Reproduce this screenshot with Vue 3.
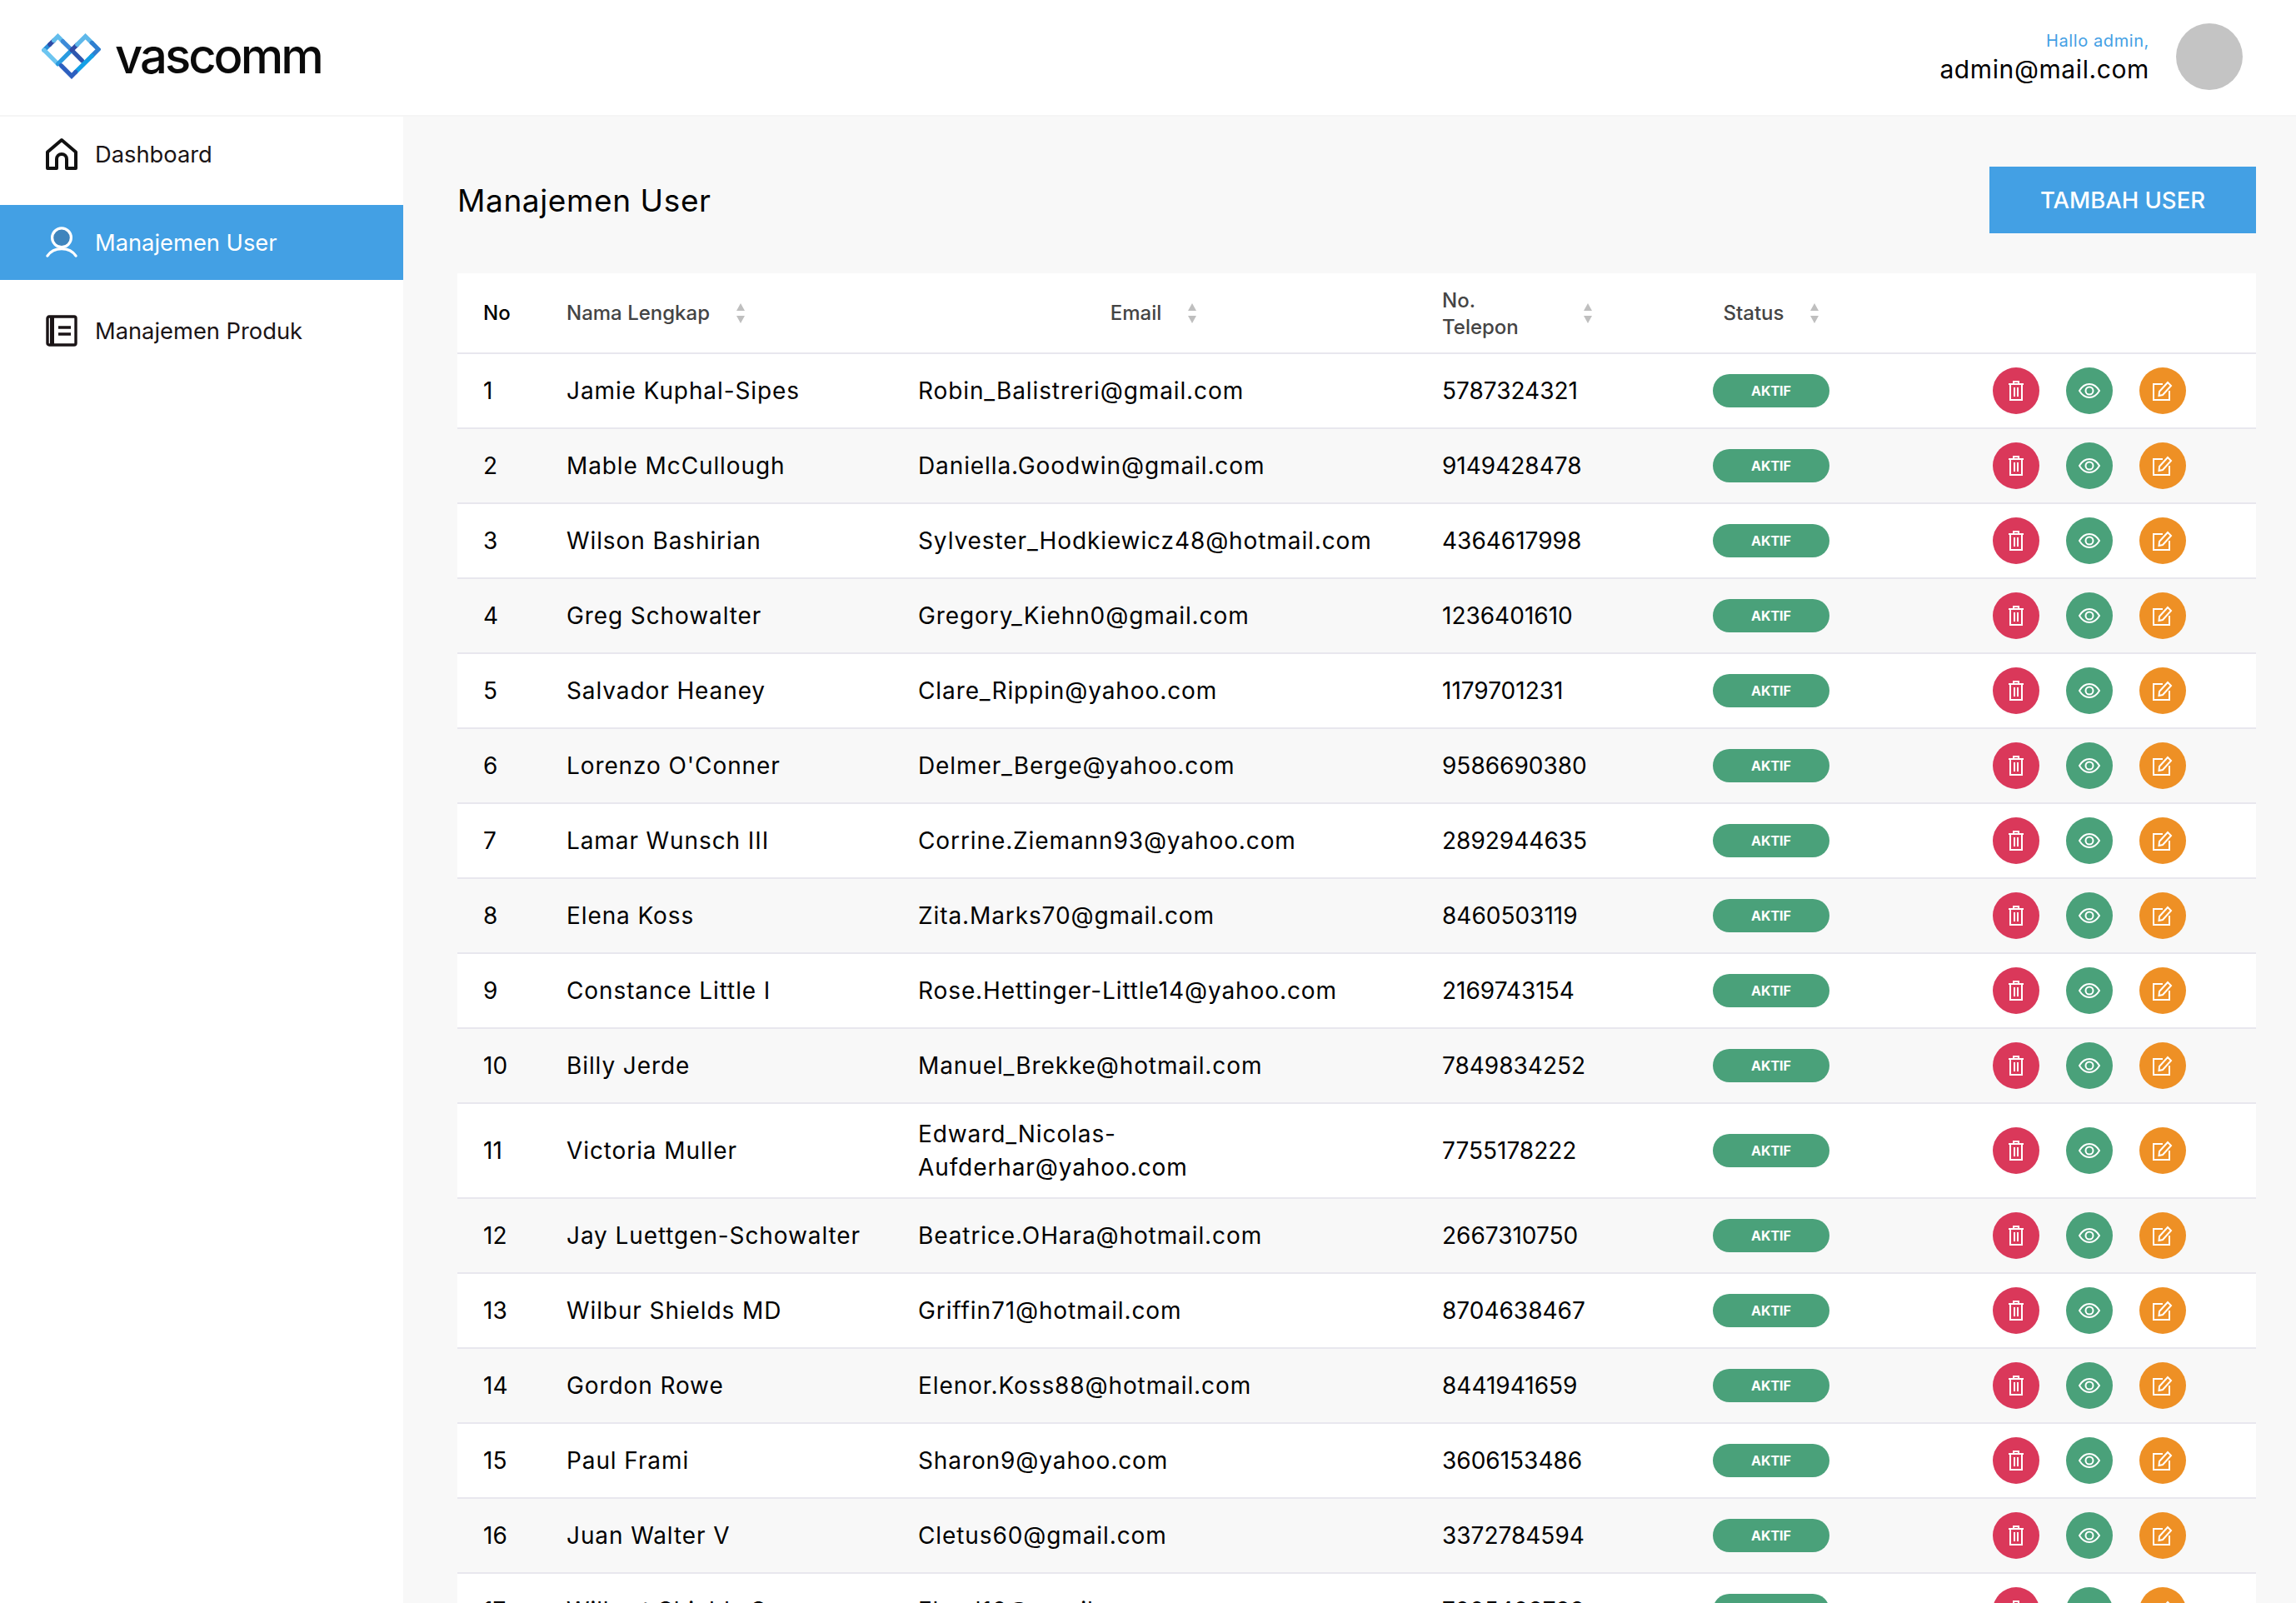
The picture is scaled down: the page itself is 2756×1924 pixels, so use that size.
<template>
  <div class="page">
    <header class="topbar">
      <div class="brand">
        <svg class="logo" viewBox="0 0 73 56" fill="none" stroke-width="5.4" stroke-linecap="round">
          <path v-for="(seg, i) in logoSegments" :key="i" :d="seg.d" :stroke="seg.color" />
        </svg>
        <span class="brand-name">vascomm</span>
      </div>
      <div class="account">
        <div class="account-text">
          <div class="hello">Hallo admin,</div>
          <div class="mail">admin@mail.com</div>
        </div>
        <div class="avatar"></div>
      </div>
    </header>

    <div class="body">
      <aside class="sidebar">
        <a class="nav-item">
          <svg class="nav-icon" viewBox="0 0 38 38" fill="none" stroke="#111" stroke-width="4" stroke-linejoin="round">
            <path d="M2 16.5 19 2l17 14.500V36H25V25a6 6 0 0 0-12 0v11H2z" />
          </svg>
          Dashboard
        </a>
        <a class="nav-item active">
          <svg class="nav-icon" viewBox="0 0 40 40" fill="none" stroke="#fff" stroke-width="3.4" stroke-linecap="round">
            <circle cx="20" cy="14" r="12" fill="#3f85bd" />
            <path d="M2 37c4-6 10-9 18-9s14 3 18 9" />
          </svg>
          Manajemen User
        </a>
        <a class="nav-item">
          <svg class="nav-icon" viewBox="0 0 38 38" fill="none" stroke="#1a1416" stroke-width="3.400">
            <rect x="2" y="2" width="34" height="34" rx="2" />
            <path d="M7.500 2v34" stroke-width="5" />
            <path d="M15 15h15M15 23h15" stroke-width="3.600" />
          </svg>
          Manajemen Produk
        </a>
      </aside>

      <main class="content">
        <div class="content-head">
          <h1>Manajemen User</h1>
          <button class="add-btn">TAMBAH USER</button>
        </div>

        <table class="users">
          <colgroup>
            <col style="width: 99px" />
            <col style="width: 422px" />
            <col style="width: 629px" />
            <col style="width: 325px" />
            <col style="width: 206px" />
            <col />
          </colgroup>
          <thead>
            <tr>
              <th class="no-cell no-head">No</th>
              <th>
                <div class="th-inner">
                  <span>Nama Lengkap</span>
                  <svg class="sorter" viewBox="0 0 10 24"><path d="M5 0l5 9H0zM0 15h10l-5 9z" /></svg>
                </div>
              </th>
              <th>
                <div class="th-inner center">
                  <span>Email</span>
                  <svg class="sorter" viewBox="0 0 10 24"><path d="M5 0l5 9H0zM0 15h10l-5 9z" /></svg>
                </div>
              </th>
              <th>
                <div class="th-inner">
                  <span class="phone-label">No.<br />Telepon</span>
                  <svg class="sorter" viewBox="0 0 10 24"><path d="M5 0l5 9H0zM0 15h10l-5 9z" /></svg>
                </div>
              </th>
              <th class="status-head">
                <div class="th-inner center">
                  <span>Status</span>
                  <svg class="sorter" viewBox="0 0 10 24"><path d="M5 0l5 9H0zM0 15h10l-5 9z" /></svg>
                </div>
              </th>
              <th></th>
            </tr>
          </thead>
          <tbody>
            <tr v-for="(user, i) in users" :key="user.phone">
              <td class="no-cell">{{ i + 1 }}</td>
              <td class="wide-text">{{ user.name }}</td>
              <td class="wide-text email-cell">{{ user.email }}</td>
              <td>{{ user.phone }}</td>
              <td class="status-cell"><span class="badge">AKTIF</span></td>
              <td class="actions-cell">
                <div class="actions">
                  <button class="round red">
                    <svg viewBox="0 0 18 24" width="18" height="24" fill="none" stroke="#fff" stroke-width="2">
                      <path d="M0 4h18M6 4V1h6v3M2 4v19h14V4M7 8v11M11 8v11" />
                    </svg>
                  </button>
                  <button class="round green">
                    <svg viewBox="0 0 26 18" width="26" height="18" fill="none" stroke="#fff" stroke-width="2">
                      <path d="M1 9c3-5 7-8 12-8s9 3 12 8c-3 5-7 8-12 8S4 14 1 9z" />
                      <circle cx="13" cy="9" r="4.500" />
                    </svg>
                  </button>
                  <button class="round orange">
                    <svg viewBox="0 0 24 24" width="24" height="24" fill="none" stroke="#fff" stroke-width="2">
                      <path d="M12 4H1v19h19V12" />
                      <path d="M8 13 18 2l4 4-10 11-4.500 1z" />
                    </svg>
                  </button>
                </div>
              </td>
            </tr>
          </tbody>
        </table>
      </main>
    </div>
  </div>
</template>

<script setup>
const logoSegments = [
  { d: "M3 20 10 13", color: "#2b8fd9" },
  { d: "M10 13 15 8", color: "#2f4ba6" },
  { d: "M15 8 20 3 26 9", color: "#62bdec" },
  { d: "M26 9 37 20", color: "#3d8ad8" },
  { d: "M37 20 50 33", color: "#2f56ae" },
  { d: "M3 20 20 37", color: "#6cc5f0" },
  { d: "M20 37 37 20", color: "#2a9be0" },
  { d: "M37 20 44 13", color: "#2f4ba6" },
  { d: "M44 13 54 3 62 11", color: "#5fb8ea" },
  { d: "M62 11 70 19 62 27", color: "#2f7fd0" },
  { d: "M62 27 42 47", color: "#14a0e6" },
  { d: "M42 47 37 52 24 39", color: "#2d5fbf" },
];

const users = [
  { name: "Jamie Kuphal-Sipes", email: "Robin_Balistreri@gmail.com", phone: "5787324321" },
  { name: "Mable McCullough", email: "Daniella.Goodwin@gmail.com", phone: "9149428478" },
  { name: "Wilson Bashirian", email: "Sylvester_Hodkiewicz48@hotmail.com", phone: "4364617998" },
  { name: "Greg Schowalter", email: "Gregory_Kiehn0@gmail.com", phone: "1236401610" },
  { name: "Salvador Heaney", email: "Clare_Rippin@yahoo.com", phone: "1179701231" },
  { name: "Lorenzo O'Conner", email: "Delmer_Berge@yahoo.com", phone: "9586690380" },
  { name: "Lamar Wunsch III", email: "Corrine.Ziemann93@yahoo.com", phone: "2892944635" },
  { name: "Elena Koss", email: "Zita.Marks70@gmail.com", phone: "8460503119" },
  { name: "Constance Little I", email: "Rose.Hettinger-Little14@yahoo.com", phone: "2169743154" },
  { name: "Billy Jerde", email: "Manuel_Brekke@hotmail.com", phone: "7849834252" },
  { name: "Victoria Muller", email: "Edward_Nicolas-Aufderhar@yahoo.com", phone: "7755178222" },
  { name: "Jay Luettgen-Schowalter", email: "Beatrice.OHara@hotmail.com", phone: "2667310750" },
  { name: "Wilbur Shields MD", email: "Griffin71@hotmail.com", phone: "8704638467" },
  { name: "Gordon Rowe", email: "Elenor.Koss88@hotmail.com", phone: "8441941659" },
  { name: "Paul Frami", email: "Sharon9@yahoo.com", phone: "3606153486" },
  { name: "Juan Walter V", email: "Cletus60@gmail.com", phone: "3372784594" },
  { name: "Wilbert Shields Sr.", email: "Floyd10@gmail.com", phone: "7005408788" },
];
</script>

<style>
html,
body {
  overflow: hidden;
}
</style>

<style scoped>
.page {
  height: 100vh;
  overflow: hidden;
  display: flex;
  flex-direction: column;
  font-family: Inter, "Liberation Sans", sans-serif;
  color: #000;
  background: #f8f8f8;
}

.topbar {
  height: 140px;
  flex: none;
  box-sizing: border-box;
  background: #fff;
  border-bottom: 2px solid #f5f5f5;
  display: flex;
  justify-content: space-between;
  align-items: center;
  padding: 0 64px 2px 50px;
}

.brand {
  display: flex;
  align-items: center;
  gap: 17px;
}

.logo {
  width: 71px;
  height: 56px;
}

.brand-name {
  font-size: 58px;
  font-weight: 500;
  letter-spacing: -3px;
  line-height: 1;
  color: #0a0a0a;
  margin-top: -3px;
}

.account {
  display: flex;
  align-items: center;
  gap: 32px;
}

.account-text {
  text-align: right;
}

.hello {
  font-size: 20px;
  letter-spacing: 0.6px;
  line-height: 30px;
  color: #43a0e4;
}

.mail {
  font-size: 30px;
  letter-spacing: 0.6px;
  line-height: 38px;
}

.avatar {
  width: 80px;
  height: 80px;
  border-radius: 50%;
  background: #c4c4c4;
}

.body {
  flex: 1;
  display: flex;
  min-height: 0;
}

.sidebar {
  width: 484px;
  flex: none;
  background: #fff;
  display: flex;
  flex-direction: column;
  gap: 16px;
}

.nav-item {
  height: 90px;
  display: flex;
  align-items: center;
  gap: 21px;
  padding-left: 55px;
  font-size: 27.3px;
  color: #1a1416;
}

.nav-item.active {
  background: #43a0e4;
  color: #fff;
}

.nav-icon {
  width: 38px;
  height: 38px;
  flex: none;
  overflow: visible;
}

.content {
  flex: 1;
  padding: 60px 48px 0 65px;
  min-width: 0;
}

.content-head {
  display: flex;
  justify-content: space-between;
  align-items: center;
  margin-bottom: 48px;
}

h1 {
  margin: 0;
  font-size: 37px;
  font-weight: 400;
  letter-spacing: 0.6px;
}

.add-btn {
  width: 320px;
  height: 80px;
  border: none;
  background: #43a0e4;
  color: #fff;
  font-family: Inter, "Liberation Sans", sans-serif;
  font-size: 27.5px;
  font-weight: 500;
}

.users {
  width: 2159px;
  table-layout: fixed;
  border-collapse: collapse;
  font-size: 28px;
}

th {
  height: 95px;
  padding: 0 32px;
  background: #fff;
  border-bottom: 2px solid #e8e7ee;
  text-align: left;
  font-size: 24px;
  font-weight: 500;
  color: #444;
}

.no-head {
  color: #000;
}

.status-head {
  padding-right: 34px;
}

.th-inner {
  display: flex;
  align-items: center;
  gap: 32px;
}

.th-inner.center {
  justify-content: center;
}

.phone-label {
  width: 138px;
  line-height: 32px;
  padding-top: 2px;
}

.sorter {
  width: 10px;
  height: 24px;
  flex: none;
  fill: #bfbfbf;
}

td {
  height: 88px;
  padding: 16px 32px;
  box-sizing: border-box;
  border-bottom: 2px solid #e8e7ee;
  line-height: 40px;
  background: #fff;
}

tbody tr:nth-child(even) td {
  background: #f8f8f8;
}

.no-cell {
  padding-left: 31px;
}

.wide-text {
  letter-spacing: 0.9px;
}

.email-cell {
  padding-right: 48px;
}

.status-cell {
  padding-right: 0;
}

.badge {
  display: flex;
  width: 140px;
  height: 40px;
  align-items: center;
  justify-content: center;
  border-radius: 20px;
  background: #4aa17a;
  color: #fff;
  font-size: 16px;
  font-weight: 700;
}

.actions {
  display: flex;
  justify-content: flex-end;
  gap: 32px;
  padding-right: 52px;
}

.round {
  width: 56px;
  height: 56px;
  padding: 0;
  border: none;
  border-radius: 50%;
  display: flex;
  align-items: center;
  justify-content: center;
}

.red {
  background: #da385a;
}

.green {
  background: #4aa17a;
}

.orange {
  background: #ee9025;
}
</style>
